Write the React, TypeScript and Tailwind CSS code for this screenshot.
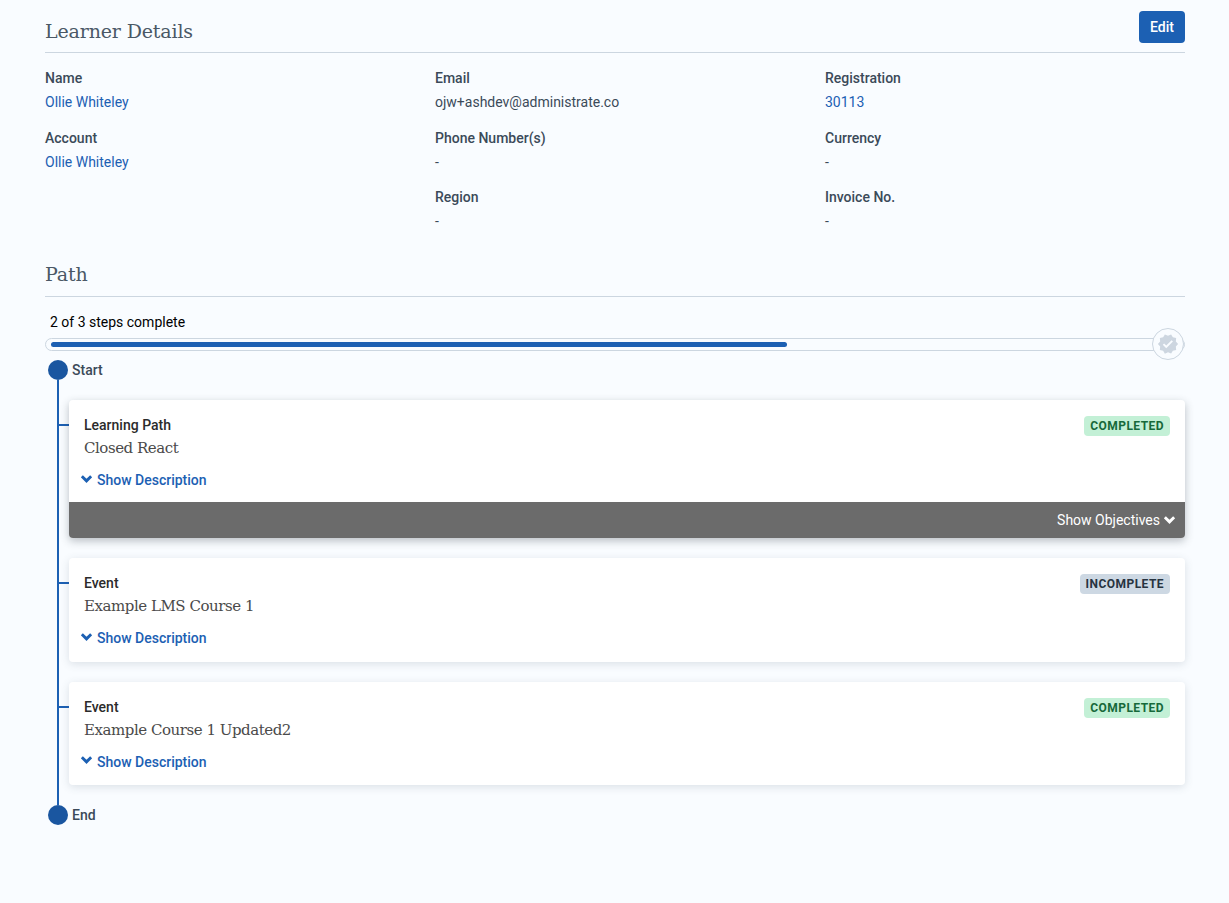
import { MdVerified } from "react-icons/md";

const sans = "font-['Roboto','Liberation_Sans',sans-serif]";
const slab = "font-['DejaVu_Serif',serif]";

interface DetailProps {
  label: string;
  value: string;
  link?: boolean;
}

function Detail({ label, value, link }: DetailProps) {
  return (
    <div className="h-[59.5px]">
      <div className="h-[24px] text-[14px] leading-[24px] font-medium text-[#3b4a59]">{label}</div>
      <div className={`h-[24px] text-[14px] leading-[24px] ${link ? "text-[#1c60b3]" : "text-[#3b4a59]"}`}>{value}</div>
    </div>
  );
}

function SectionTitle({ children }: { children: string }) {
  return (
    <h2 className={`${slab} text-[19px] leading-[32px] font-normal tracking-[-0.15px] text-[#4a5866]`}>{children}</h2>
  );
}

function Chevron({ className }: { className: string }) {
  return (
    <svg viewBox="0 0 14 10" className={`h-[9.3px] w-[13px] ${className}`} fill="none" stroke="currentColor" strokeWidth="3.1">
      <path d="M2 2.4 7 7.4 12 2.4" />
    </svg>
  );
}

function Badge({ status }: { status: "COMPLETED" | "INCOMPLETE" }) {
  const tone = status === "COMPLETED" ? "bg-[#c3f0d6] text-[#17693a]" : "bg-[#cdd8e3] text-[#27333f]";
  return (
    <span className={`mt-[1px] h-[20px] rounded-[4px] px-[6px] text-[12px] leading-[20px] font-bold tracking-[0.45px] ${tone}`}>
      {status}
    </span>
  );
}

interface StepProps {
  type: string;
  title: string;
  status: "COMPLETED" | "INCOMPLETE";
  objectives?: boolean;
}

function Step({ type, title, status, objectives }: StepProps) {
  return (
    <div className="flex items-start">
      <div className="mt-[24px] h-[2px] w-[10px] shrink-0 bg-[#1c60b3]" />
      <div className={`flex-1 overflow-hidden rounded-[4px] bg-white ${objectives ? "shadow-[0_3px_9px_rgba(40,50,60,0.3)]" : "shadow-[0_2px_8px_rgba(60,80,100,0.16)]"}`}>
        <div className={`px-[15px] pt-[15px] ${objectives ? "pb-[12px]" : "pb-[13.5px]"}`}>
          <div className="flex h-[20px] items-start justify-between">
            <div className="h-[20px] text-[14px] leading-[20px] font-medium text-[#2b2b2b]">{type}</div>
            <Badge status={status} />
          </div>
          <div className={`${slab} mt-[1px] h-[24px] text-[15px] leading-[24px] font-normal tracking-[-0.46px] text-[#4a4a4a]`}>{title}</div>
          <div className="mt-[10px] -ml-[4px] flex h-[20px] items-center gap-[4px]">
            <Chevron className="mb-[3px] text-[#1c60b3]" />
            <span className="text-[14px] leading-[20px] font-medium text-[#1c60b3]">Show Description</span>
          </div>
        </div>
        {objectives && (
          <div className="flex h-[36px] items-center justify-end gap-[3px] bg-[#6b6b6b] pr-[9px] text-[14px] text-white">
            <span>Show Objectives</span>
            <Chevron className="" />
          </div>
        )}
      </div>
    </div>
  );
}

export default function App() {
  return (
    <div className={`${sans} min-h-[903px] bg-[#f9fcff] pr-[44px] pl-[45px]`}>
      <div className="flex h-[53px] items-start justify-between border-b border-[#ccd6e0] pt-[11px]">
        <div className="pt-[4px]"><SectionTitle>Learner Details</SectionTitle></div>
        <button className="h-[32px] w-[46px] rounded-[4px] bg-[#1c60b3] text-[14px] font-medium text-white">Edit</button>
      </div>

      <div className="grid grid-cols-[390px_390px_1fr] pt-[13px]">
        <div>
          <Detail label="Name" value="Ollie Whiteley" link />
          <Detail label="Account" value="Ollie Whiteley" link />
        </div>
        <div>
          <Detail label="Email" value="ojw+ashdev@administrate.co" />
          <Detail label="Phone Number(s)" value="-" />
          <Detail label="Region" value="-" />
        </div>
        <div>
          <Detail label="Registration" value="30113" link />
          <Detail label="Currency" value="-" />
          <Detail label="Invoice No." value="-" />
        </div>
      </div>

      <div className="mt-[-1px] flex h-[53.5px] items-end border-b border-[#ccd6e0] pb-[6px]">
        <SectionTitle>Path</SectionTitle>
      </div>

      <div className="pt-[15px]">
        <div className="pl-[5px] text-[14px] leading-[20px] text-black">2 of 3 steps complete</div>
        <div className="relative mt-[6px] h-[13px] rounded-full border border-[#ccd6e0] py-[3px] pl-[5px]">
          <div className="h-[5px] w-[64.97%] rounded-full bg-[#1c60b3]" />
          <div className="absolute top-[-11px] right-[0px] flex h-[32px] w-[32px] items-center justify-center rounded-full border border-[#ccd6e0] bg-[#f9fcff]">
            <MdVerified className="h-[22px] w-[22px] text-[#cdd6e0]" />
          </div>
        </div>
      </div>

      <div className="mt-[9px] flex h-[20px] items-center gap-[4px] pl-[3px]">
        <div className="h-[20px] w-[20px] rounded-full bg-[#1a56a0]" />
        <span className="text-[14px] font-medium text-[#3b4a59]">Start</span>
      </div>
      <div className="ml-[12px] flex flex-col gap-[20px] border-l-[2px] border-[#1c60b3] py-[20px]">
        <Step type="Learning Path" title="Closed React" status="COMPLETED" objectives />
        <Step type="Event" title="Example LMS Course 1" status="INCOMPLETE" />
        <Step type="Event" title="Example Course 1 Updated2" status="COMPLETED" />
      </div>
      <div className="flex h-[20px] items-center gap-[4px] pl-[3px]">
        <div className="h-[20px] w-[20px] rounded-full bg-[#1a56a0]" />
        <span className="text-[14px] font-medium text-[#3b4a59]">End</span>
      </div>
    </div>
  );
}
